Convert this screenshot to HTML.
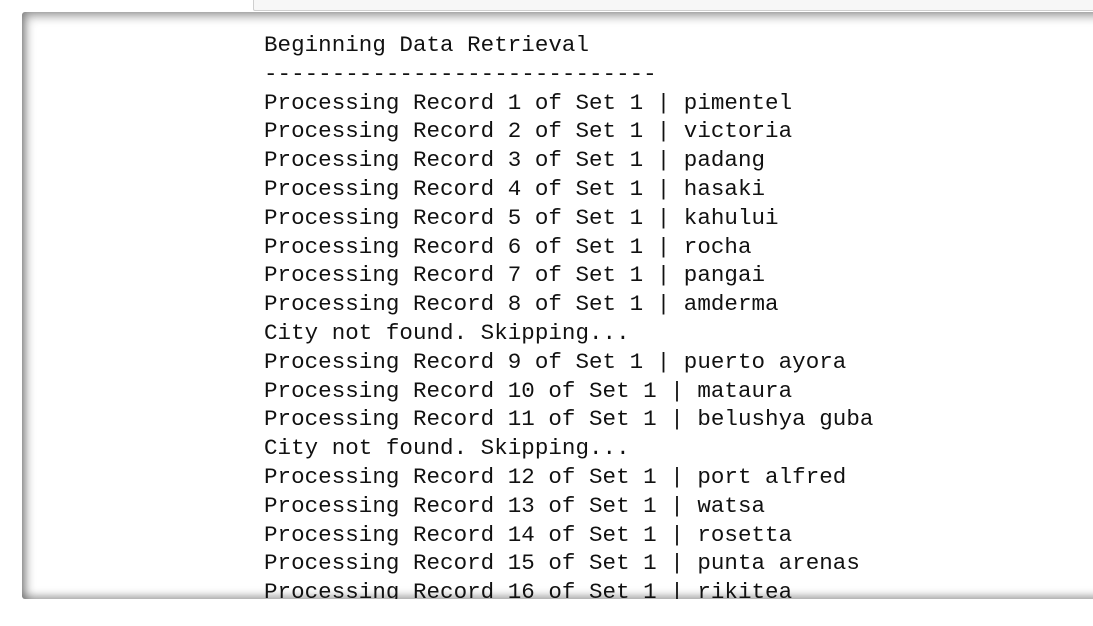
<!DOCTYPE html>
<html><head><meta charset="utf-8"><style>
html,body{margin:0;padding:0;background:#fff;width:1093px;height:626px;overflow:hidden;position:relative}
.top{position:absolute;left:253px;top:-1px;width:850px;height:10px;background:#f7f7f7;border:1px solid #cfcfcf;border-radius:0 0 0 2px}
.box{position:absolute;left:22px;top:12px;width:1100px;height:587px;background:#fff;border-radius:3px;box-shadow:inset 4px 4px 10px rgba(0,0,0,0.4), inset 0 -4px 8px rgba(0,0,0,0.28);overflow:hidden}
pre{position:absolute;left:242px;top:19px;margin:0;font-family:"Liberation Mono",monospace;font-size:22.5px;line-height:28.8px;color:#111;letter-spacing:0.04px}
</style></head><body>
<div class="top"></div>
<div class="box"><pre>Beginning Data Retrieval
-----------------------------
Processing Record 1 of Set 1 | pimentel
Processing Record 2 of Set 1 | victoria
Processing Record 3 of Set 1 | padang
Processing Record 4 of Set 1 | hasaki
Processing Record 5 of Set 1 | kahului
Processing Record 6 of Set 1 | rocha
Processing Record 7 of Set 1 | pangai
Processing Record 8 of Set 1 | amderma
City not found. Skipping...
Processing Record 9 of Set 1 | puerto ayora
Processing Record 10 of Set 1 | mataura
Processing Record 11 of Set 1 | belushya guba
City not found. Skipping...
Processing Record 12 of Set 1 | port alfred
Processing Record 13 of Set 1 | watsa
Processing Record 14 of Set 1 | rosetta
Processing Record 15 of Set 1 | punta arenas
Processing Record 16 of Set 1 | rikitea</pre></div>
</body></html>
